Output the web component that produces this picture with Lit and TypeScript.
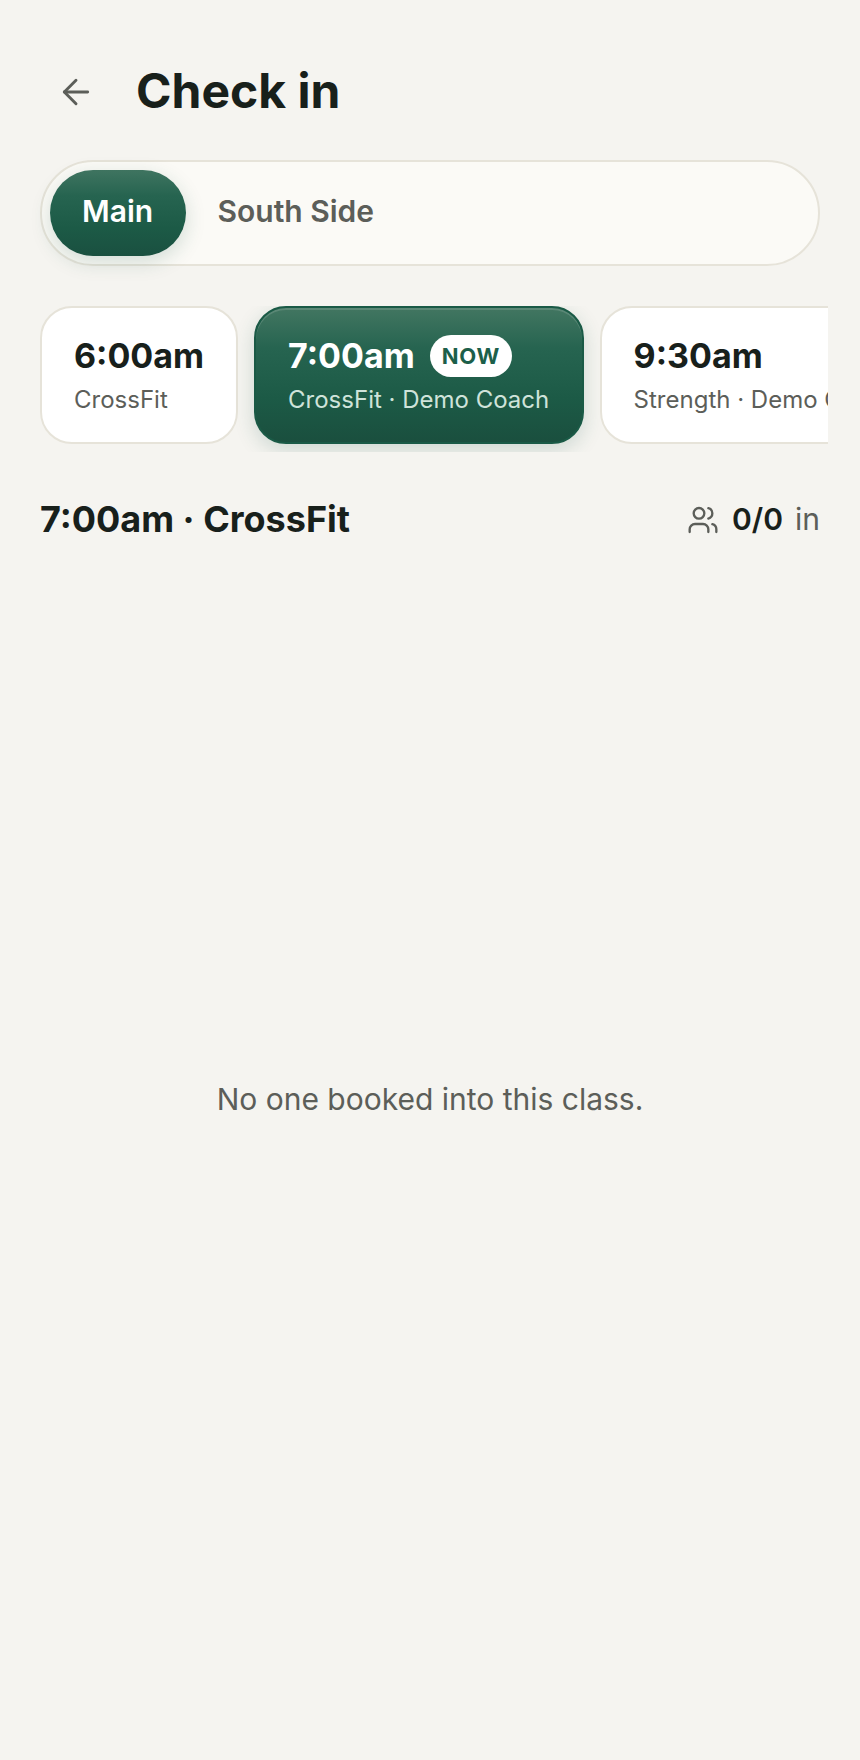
import { LitElement, html, css } from "lit";
import { customElement } from "lit/decorators.js";

@customElement("app-root")
export class AppRoot extends LitElement {
  static styles = css`
    :host {
      display: block;
      width: 860px;
      height: 1760px;
      background: #f5f4f0;
      font-family: Inter, "Noto Sans", sans-serif;
      color: #18201b;
      overflow: hidden;
    }
    .page {
      display: flex;
      flex-direction: column;
      height: 100%;
      padding: 56px 40px 0;
      box-sizing: border-box;
    }
    .header {
      display: flex;
      align-items: center;
      gap: 24px;
      height: 72px;
    }
    .back {
      width: 72px;
      height: 72px;
      display: flex;
      align-items: center;
      justify-content: center;
      color: #5c5e59;
    }
    .title {
      font-size: 48px;
      font-weight: 700;
      line-height: 70px;
      padding-bottom: 2px;
    }
    .seg {
      margin-top: 32px;
      height: 106px;
      box-sizing: border-box;
      border: 2px solid #e6e3d9;
      border-radius: 53px;
      background: #fbfaf6;
      padding: 8px;
      display: flex;
      gap: 0;
      font-size: 30px;
      font-weight: 600;
    }
    .seg-item {
      display: flex;
      align-items: center;
      padding: 0 32px 4px;
      border-radius: 43px;
      color: #5c5e59;
    }
    .seg-item.on {
      color: #fff;
      padding: 0 32.4px 4px 32px;
      background: linear-gradient(180deg, #3f7460 0%, #266450 30%, #1c5a46 68%, #1a5040 100%);
      box-shadow: 0 6px 20px rgba(26, 90, 70, 0.18);
    }
    .scroller {
      display: flex;
      gap: 16px;
      margin-top: 40px;
      width: 788px;
      padding: 0 0 8px;
      overflow: hidden;
      flex: none;
    }
    .card {
      flex: none;
      box-sizing: border-box;
      height: 138px;
      border: 2px solid #e6e3d9;
      border-radius: 32px;
      background: #fff;
      padding: 0 32px 1px;
      display: flex;
      flex-direction: column;
      justify-content: center;
      gap: 6px;
    }
    .card.on {
      padding-right: 32.4px;
      border: 2px solid #1a5a46;
      background: linear-gradient(180deg, #427661 0%, #266450 30%, #1c5a46 68%, #1a4f3e 100%);
      box-shadow: 0 6px 20px rgba(26, 90, 70, 0.18), inset 0 2px 0 rgba(255, 255, 255, 0.14);
      color: #fff;
    }
    .time-row {
      display: flex;
      align-items: center;
      gap: 15px;
      height: 44px;
    }
    .time {
      font-size: 34px;
      font-weight: 700;
      line-height: 44px;
      white-space: nowrap;
    }
    .now {
      background: #fff;
      color: #1c5f4a;
      font-size: 22px;
      font-weight: 700;
      letter-spacing: 0.8px;
      height: 42px;
      padding: 0 12px;
      border-radius: 21px;
      display: flex;
      align-items: center;
    }
    .sub {
      font-size: 24px;
      line-height: 32px;
      color: #5c5e59;
      white-space: nowrap;
    }
    .card.on .sub {
      color: #cfe3da;
    }
    .row {
      display: flex;
      align-items: center;
      justify-content: space-between;
      margin-top: 43px;
      width: 780px;
      height: 48px;
    }
    .row-title {
      font-size: 36px;
      font-weight: 700;
    }
    .count {
      display: flex;
      align-items: center;
      font-size: 30px;
      color: #5c5e59;
    }
    .count svg {
      margin: 2px 13px 0 0;
    }
    .count b {
      color: #18201b;
      font-weight: 600;
      margin-right: 12px;
    }
    .empty {
      margin-top: 536px;
      width: 780px;
      text-align: center;
      font-size: 30px;
      line-height: 40px;
      color: #5c5e59;
    }
  `;

  render() {
    return html`
      <div class="page">
        <div class="header">
          <div class="back">
            <svg width="40" height="40" viewBox="0 0 24 24" fill="none" stroke="currentColor" stroke-width="1.75" stroke-linecap="round" stroke-linejoin="round">
              <path d="M19 12H5" /><path d="M12 19l-7-7 7-7" />
            </svg>
          </div>
          <div class="title">Check in</div>
        </div>
        <div class="seg">
          <div class="seg-item on">Main</div>
          <div class="seg-item">South Side</div>
        </div>
        <div class="scroller">
          <div class="card">
            <div class="time-row"><span class="time">6:00am</span></div>
            <div class="sub">CrossFit</div>
          </div>
          <div class="card on">
            <div class="time-row"><span class="time">7:00am</span><span class="now">NOW</span></div>
            <div class="sub">CrossFit · Demo Coach</div>
          </div>
          <div class="card">
            <div class="time-row"><span class="time">9:30am</span></div>
            <div class="sub">Strength · Demo Coach</div>
          </div>
        </div>
        <div class="row">
          <div class="row-title">7:00am · CrossFit</div>
          <div class="count">
            <svg width="32" height="32" viewBox="0 0 24 24" fill="none" stroke="currentColor" stroke-width="1.75" stroke-linecap="round" stroke-linejoin="round">
              <path d="M16 21v-2a4 4 0 0 0-4-4H6a4 4 0 0 0-4 4v2" />
              <circle cx="9" cy="7" r="4" />
              <path d="M22 21v-2a4 4 0 0 0-3-3.87" />
              <path d="M16 3.13a4 4 0 0 1 0 7.75" />
            </svg>
            <b>0/0</b><span>in</span>
          </div>
        </div>
        <div class="empty">No one booked into this class.</div>
      </div>
    `;
  }
}
